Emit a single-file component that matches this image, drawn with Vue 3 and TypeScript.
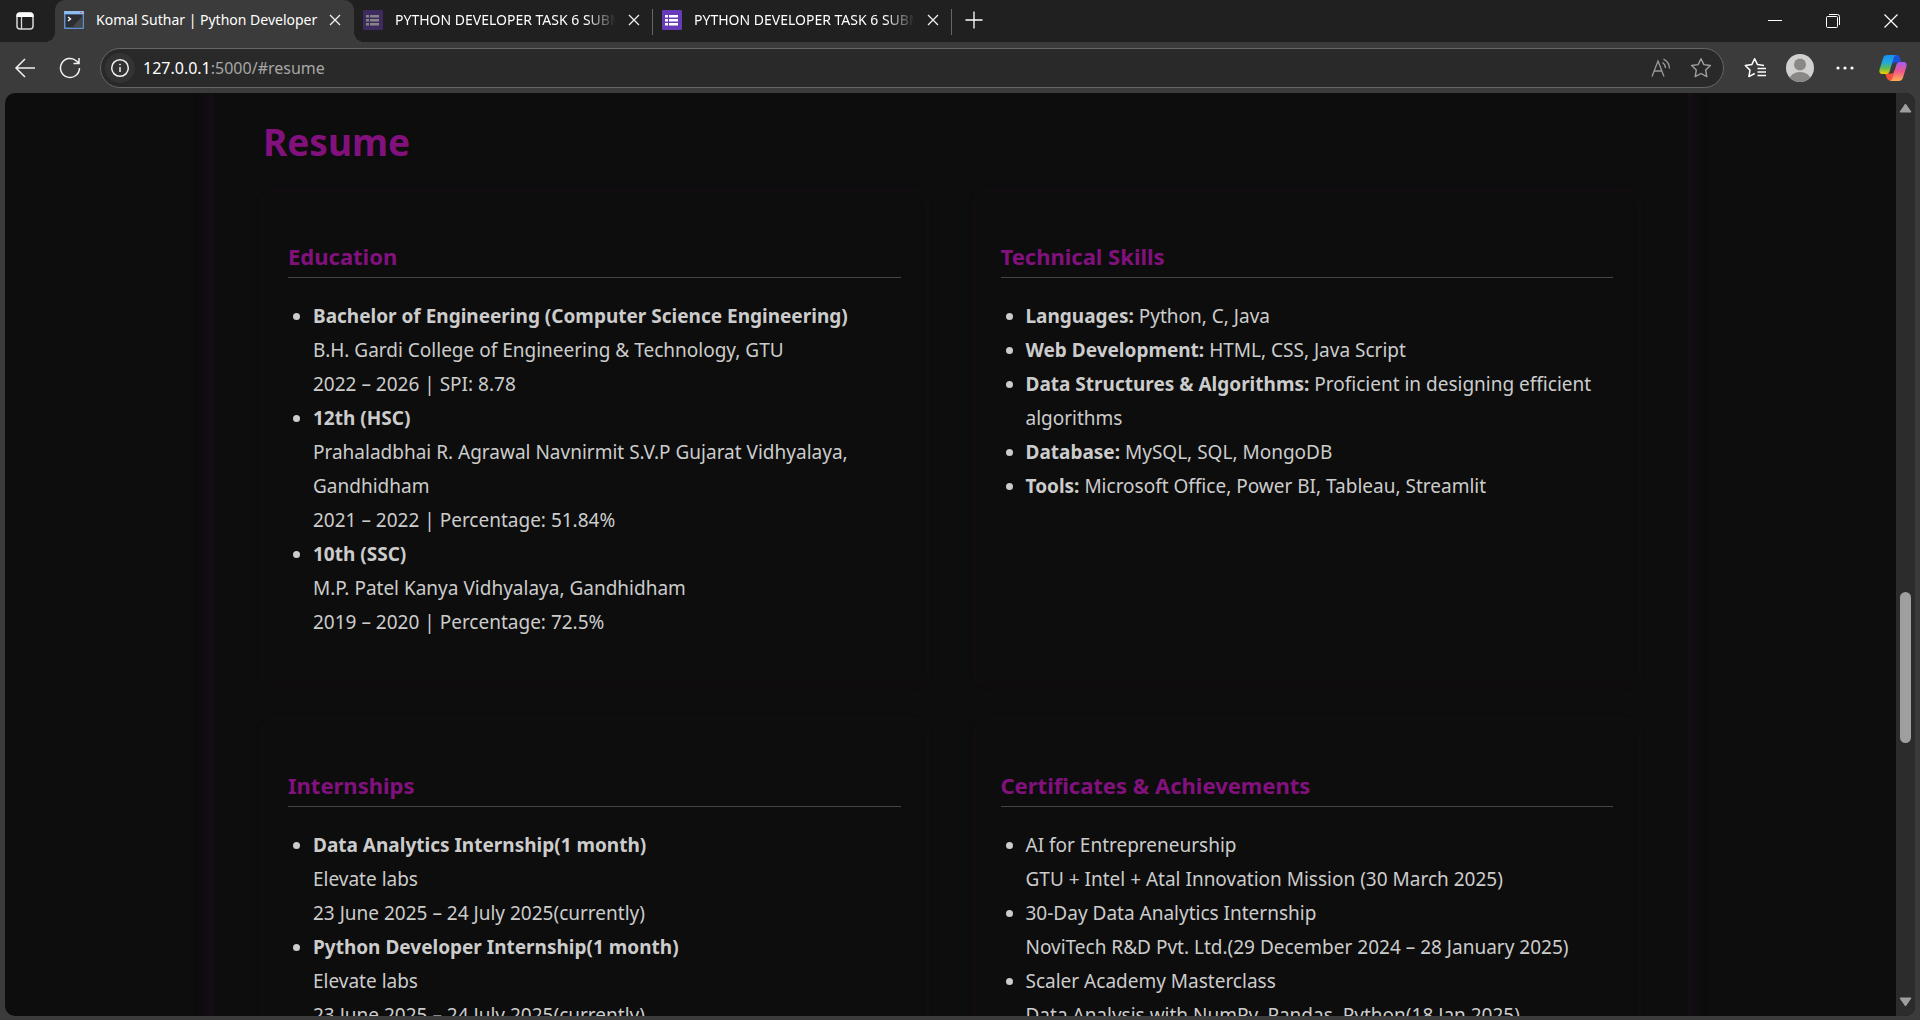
<script setup lang="ts">
interface Tab {
  title: string
  icon: 'console' | 'form' | 'form-dim'
  active?: boolean
}

interface Entry {
  strong?: string
  text?: string
  lines?: string[]
}

interface Card {
  title: string
  entries: Entry[]
}

const tabs: Tab[] = [
  { title: 'Komal Suthar | Python Developer', icon: 'console', active: true },
  { title: 'PYTHON DEVELOPER TASK 6 SUBMISSION', icon: 'form-dim' },
  { title: 'PYTHON DEVELOPER TASK 6 SUBMISSION', icon: 'form' },
]

const cards: Card[] = [
  {
    title: 'Education',
    entries: [
      {
        strong: 'Bachelor of Engineering (Computer Science Engineering)',
        lines: ['B.H. Gardi College of Engineering & Technology, GTU', '2022 – 2026 | SPI: 8.78'],
      },
      {
        strong: '12th (HSC)',
        lines: [
          'Prahaladbhai R. Agrawal Navnirmit S.V.P Gujarat Vidhyalaya, Gandhidham',
          '2021 – 2022 | Percentage: 51.84%',
        ],
      },
      {
        strong: '10th (SSC)',
        lines: ['M.P. Patel Kanya Vidhyalaya, Gandhidham', '2019 – 2020 | Percentage: 72.5%'],
      },
    ],
  },
  {
    title: 'Technical Skills',
    entries: [
      { strong: 'Languages:', text: 'Python, C, Java' },
      { strong: 'Web Development:', text: 'HTML, CSS, Java Script' },
      { strong: 'Data Structures & Algorithms:', text: 'Proficient in designing efficient algorithms' },
      { strong: 'Database:', text: 'MySQL, SQL, MongoDB' },
      { strong: 'Tools:', text: 'Microsoft Office, Power BI, Tableau, Streamlit' },
    ],
  },
  {
    title: 'Internships',
    entries: [
      { strong: 'Data Analytics Internship(1 month)', lines: ['Elevate labs', '23 June 2025 – 24 July 2025(currently)'] },
      { strong: 'Python Developer Internship(1 month)', lines: ['Elevate labs', '23 June 2025 – 24 July 2025(currently)'] },
    ],
  },
  {
    title: 'Certificates & Achievements',
    entries: [
      { text: 'AI for Entrepreneurship', lines: ['GTU + Intel + Atal Innovation Mission (30 March 2025)'] },
      { text: '30-Day Data Analytics Internship', lines: ['NoviTech R&D Pvt. Ltd.(29 December 2024 – 28 January 2025)'] },
      { text: 'Scaler Academy Masterclass', lines: ['Data Analysis with NumPy, Pandas, Python(18 Jan 2025)'] },
    ],
  },
]
</script>

<template>
  <div class="browser">
    <header class="tabstrip">
      <button class="tab-actions" aria-label="Tab actions">
        <svg width="20" height="20" viewBox="0 0 20 20">
          <rect x="2" y="2" width="16" height="16" rx="3" fill="none" stroke="#d8d8d8" stroke-width="1.5" />
          <path d="M1.5 6V4.5a3 3 0 0 1 3-3h11a3 3 0 0 1 3 3V6z" fill="#fff" />
          <path d="M6.5 6v12" stroke="#d8d8d8" stroke-width="1.3" />
        </svg>
      </button>
      <div v-for="(tab, i) in tabs" :key="i" class="tab" :class="{ active: tab.active }">
        <svg v-if="tab.icon === 'console'" class="favicon" width="20" height="20" viewBox="0 0 20 20">
          <rect x="0" y="1" width="20" height="18" rx="1" fill="#5f92cf" />
          <rect x="0" y="1" width="20" height="3" rx="1" fill="#8fbcf0" />
          <rect x="16" y="2" width="2" height="1" fill="#e06050" />
          <rect x="1.500" y="4.500" width="17" height="13" fill="#2b2d30" />
          <path d="M8 17.500L18.500 6v11.500z" fill="#45484b" />
          <path d="M4 7l2.500 2L4 11" fill="none" stroke="#fff" stroke-width="1.400" />
        </svg>
        <svg v-else class="favicon" :class="{ dim: tab.icon === 'form-dim' }" width="20" height="20" viewBox="0 0 20 20">
          <rect width="20" height="20" rx="1" class="form-bg" />
          <path d="M3 5h3v2.500H3zM7 5h9v2.500H7zM3 9h3v2.500H3zM7 9h9v2.500H7zM3 13h3v2.500H3zM7 13h9v2.500H7z" class="form-fg" />
        </svg>
        <span class="tab-title">{{ tab.title }}</span>
        <button class="tab-close" aria-label="Close tab">
          <svg width="12" height="12" viewBox="0 0 12 12">
            <path d="M1 1l10 10M11 1L1 11" stroke="#f0f0f0" stroke-width="1.300" />
          </svg>
        </button>
      </div>
      <button class="new-tab" aria-label="New tab">
        <svg width="18" height="18" viewBox="0 0 18 18">
          <path d="M9 .5v17M.5 9h17" stroke="#fff" stroke-width="1.300" />
        </svg>
      </button>
      <div class="window-controls">
        <button aria-label="Minimize">
          <svg width="14" height="14" viewBox="0 0 14 14"><path d="M0 6.500h14" stroke="#fff" /></svg>
        </button>
        <button aria-label="Restore">
          <svg width="14" height="14" viewBox="0 0 14 14" fill="none" stroke="#fff">
            <rect x=".5" y="2.500" width="11" height="11" rx="1" />
            <path d="M3 .5h8.500a2 2 0 0 1 2 2V11" />
          </svg>
        </button>
        <button aria-label="Close">
          <svg width="14" height="14" viewBox="0 0 14 14"><path d="M.5.5l13 13M13.500.5l-13 13" stroke="#fff" stroke-width="1.200" /></svg>
        </button>
      </div>
    </header>

    <nav class="toolbar">
      <button class="nav-button" aria-label="Back">
        <svg width="22" height="20" viewBox="0 0 22 20" fill="none" stroke="#f2f2f2" stroke-width="1.500">
          <path d="M21 10H2M11 1L2 10l9 9" />
        </svg>
      </button>
      <button class="nav-button" aria-label="Refresh">
        <svg width="22" height="22" viewBox="0 0 22 22" fill="none" stroke="#f2f2f2" stroke-width="1.500">
          <path d="M20.500 11a9.500 9.500 0 1 1-3-7l2.500 2.400M20 1v5.500h-5.500" />
        </svg>
      </button>
      <div class="address">
        <button class="site-info" aria-label="View site information">
          <svg width="20" height="20" viewBox="0 0 20 20" fill="none" stroke="#f2f2f2" stroke-width="1.500">
            <circle cx="10" cy="10" r="8.300" />
            <path d="M10 9v5" />
            <circle cx="10" cy="6.500" r=".5" fill="#f2f2f2" stroke-width=".8" />
          </svg>
        </button>
        <div class="url"><span class="host">127.0.0.1</span>:5000/#resume</div>
        <button class="address-action" aria-label="Read aloud">
          <svg width="20" height="20" viewBox="0 0 20 20" fill="none" stroke="#9a9a9a" stroke-width="1.300">
            <path d="M1 18.500L7 3l6 15.500M3 13h8M11.500 4.500a7 7 0 0 1 3 5.500M12.500 1.200a11 11 0 0 1 6 9.300" />
          </svg>
        </button>
        <button class="address-action" aria-label="Add to favorites">
          <svg width="22" height="22" viewBox="0 0 22 22" fill="none" stroke="#a0a0a0" stroke-width="1.400" stroke-linejoin="round">
            <path d="M11 1.700l2.900 5.900 6.500.9-4.700 4.600 1.100 6.500-5.800-3.100-5.800 3.100 1.100-6.500-4.700-4.600 6.500-.9z" />
          </svg>
        </button>
      </div>
      <button class="tool" aria-label="Favorites">
        <svg width="22" height="22" viewBox="0 0 22 22" fill="none" stroke="#fff" stroke-width="1.500" stroke-linejoin="round">
          <path d="M20 8.500l-6.500-.9L10.700 1.700 7.800 7.600l-6.500.9L6 13.100l-1.100 6.500 5.800-3.100M13.500 11.500H22M13.500 15H22M13.500 18.500H22" />
        </svg>
      </button>
      <button class="tool" aria-label="Profile">
        <svg width="28" height="28" viewBox="0 0 28 28">
          <defs><clipPath id="avatar"><circle cx="14" cy="14" r="14" /></clipPath></defs>
          <circle cx="14" cy="14" r="14" fill="#d2d0ce" />
          <g clip-path="url(#avatar)" fill="#8a8886">
            <circle cx="14" cy="10.500" r="6" />
            <ellipse cx="14" cy="25.500" rx="10.500" ry="7.500" />
          </g>
        </svg>
      </button>
      <button class="tool" aria-label="Settings and more">
        <svg width="18" height="6" viewBox="0 0 18 6" fill="#fff">
          <circle cx="2" cy="3" r="1.600" /><circle cx="9" cy="3" r="1.600" /><circle cx="16" cy="3" r="1.600" />
        </svg>
      </button>
      <button class="tool" aria-label="Copilot">
        <svg width="28" height="26" viewBox="0 0 28 26">
          <defs>
            <linearGradient id="cool" x1="0" y1="0" x2="0" y2="1">
              <stop offset="0" stop-color="#1590f0" />
              <stop offset=".4" stop-color="#22a8dc" />
              <stop offset=".7" stop-color="#62bc50" />
              <stop offset="1" stop-color="#f5d000" />
            </linearGradient>
            <linearGradient id="warm" x1="0" y1="0" x2="0" y2="1">
              <stop offset="0" stop-color="#a05cf0" />
              <stop offset=".5" stop-color="#f0588a" />
              <stop offset="1" stop-color="#ffb050" />
            </linearGradient>
          </defs>
          <path d="M13 0h5c2 0 2.500 1.500 3 3l1.300 4.500H17c-2 0-3 1-3.500 3z" fill="#1c50d8" />
          <path d="M6 18.500h8l2-4 2 3-1 5c-.5 1.500-1.500 3-3 3h-3c-2 0-3-1.500-3.500-3.500z" fill="#f0503c" />
          <path d="M8.500 0H18c-2 0-3 1.500-3.500 3.200L11 15c-.7 2.500-1.500 4-4 4H4C.7 19 0 17 .5 14.500L4 3.500C4.700 1 6 0 8.500 0z" fill="url(#cool)" />
          <path d="M19.500 26H10c2 0 3-1.500 3.500-3.200L17 11c.7-2.500 1.500-4 4-4h3c3.300 0 4 2 3.500 4.500L24 22.500c-.7 2.500-2 3.500-4.500 3.500z" fill="url(#warm)" />
        </svg>
      </button>
    </nav>

    <div class="viewport">
      <main class="page">
        <section id="resume" class="resume">
          <h2>Resume</h2>
          <div class="grid">
            <article v-for="card in cards" :key="card.title" class="card">
              <h3>{{ card.title }}</h3>
              <ul>
                <li v-for="(entry, i) in card.entries" :key="i">
                  <strong v-if="entry.strong">{{ entry.strong }}</strong>
                  {{ entry.text }}
                  <template v-for="line in entry.lines" :key="line"><br />{{ line }}</template>
                </li>
              </ul>
            </article>
          </div>
        </section>
      </main>
      <div class="scrollbar">
        <svg width="13" height="10" viewBox="0 0 13 10">
          <path d="M6.500 1L12 9H1z" fill="#9f9f9f" stroke="#9f9f9f" stroke-linejoin="round" />
        </svg>
        <div class="track"><div class="thumb"></div></div>
        <svg width="13" height="10" viewBox="0 0 13 10">
          <path d="M6.500 9L12 1H1z" fill="#9f9f9f" stroke="#9f9f9f" stroke-linejoin="round" />
        </svg>
      </div>
    </div>
  </div>
</template>

<style>
body {
  margin: 0;
  background: #3b3b3b;
}
</style>

<style scoped>
* {
  box-sizing: border-box;
}

.browser {
  display: flex;
  flex-direction: column;
  height: 100vh;
  overflow: hidden;
  background: #3b3b3b;
  color: #fff;
  font-family: "Noto Sans", "Open Sans", sans-serif;
}

button {
  display: flex;
  align-items: center;
  justify-content: center;
  flex: none;
  padding: 0;
  border: 0;
  background: none;
}

.tabstrip {
  display: flex;
  flex: none;
  height: 42px;
  background: #202020;
}

.tab-actions {
  width: 55px;
  padding-right: 5px;
}

.tab {
  position: relative;
  display: flex;
  align-items: center;
  flex: 0 1 299px;
  min-width: 0;
  padding: 0 9px;
  padding-bottom: 2px;
}

.tab.active {
  background: #3b3b3b;
  border-radius: 10px 10px 0 0;
}

.tab.active::before,
.tab.active::after {
  content: "";
  position: absolute;
  bottom: 0;
  width: 10px;
  height: 10px;
}

.tab.active::before {
  right: 100%;
  background: radial-gradient(circle at 0 0, transparent 10px, #3b3b3b 10px);
}

.tab.active::after {
  left: 100%;
  background: radial-gradient(circle at 100% 0, transparent 10px, #3b3b3b 10px);
}

.tab:not(.active)::after {
  content: "";
  position: absolute;
  top: 9px;
  right: 0;
  width: 1px;
  height: 26px;
  background: #666;
}

.favicon {
  flex: none;
  margin-right: 12px;
}

.form-bg {
  fill: #673ab7;
}

.form-fg {
  fill: #fff;
}

.dim .form-bg {
  fill: #3e2a5e;
}

.dim .form-fg {
  fill: #858585;
}

.tab-title {
  flex: 1;
  overflow: hidden;
  font-size: 14px;
  line-height: 20px;
  white-space: nowrap;
}

.tab:not(.active) .tab-title {
  mask-image: linear-gradient(to right, #000 calc(100% - 34px), transparent calc(100% - 4px));
}

.tab-close {
  width: 20px;
  height: 20px;
  margin-left: 4px;
}

.new-tab {
  width: 44px;
  padding-bottom: 3px;
}

.window-controls {
  display: flex;
  margin-left: auto;
}

.window-controls button {
  width: 58px;
}

.toolbar {
  display: flex;
  align-items: center;
  flex: none;
  height: 51px;
  padding-right: 1px;
}

.nav-button {
  width: 45px;
  margin-left: 2px;
}

.nav-button + .nav-button {
  margin-left: 0;
}

.address {
  display: flex;
  align-items: center;
  flex: 1;
  height: 40px;
  margin-left: 8px;
  margin-right: 8px;
  padding: 0 2px 0 4px;
  border: 1px solid #666;
  border-radius: 20px;
  background: #292929;
}

.site-info {
  width: 30px;
  height: 30px;
  border-radius: 50%;
  background: #333;
}

.url {
  flex: 1;
  margin-left: 8px;
  color: #a6a6a6;
  font-size: 16px;
  line-height: 24px;
}

.host {
  color: #fff;
}

.address-action {
  width: 40px;
}

.tool {
  width: 45px;
}

.tool:last-child {
  width: 52px;
}

.viewport {
  display: flex;
  flex: 1;
  min-height: 0;
  margin: 0 5px 4px;
  overflow: hidden;
  border-radius: 10px;
  background: #0d0d0d;
}

.page {
  flex: 1;
  min-width: 0;
  overflow: hidden;
  color: #ccc;
}

.resume {
  max-width: 1475px;
  margin: -40px auto 0;
  padding: 55px 50px 50px;
  background: #0d0d0d;
  box-shadow: 0 0 20px rgba(128, 16, 128, 0.16);
}

h2 {
  margin: 0 0 16px;
  color: #82117d;
  font-size: 37px;
  line-height: 68px;
}

.grid {
  display: grid;
  grid-template-columns: 1fr 1fr;
  gap: 37px 50px;
}

.card {
  padding: 25px;
  border-radius: 12px;
  background: #0d0d0d;
  box-shadow: 0 0 10px rgba(128, 32, 128, 0.1);
}

h3 {
  margin: 20px 0 21px;
  padding-bottom: 2px;
  border-bottom: 1px solid #444;
  color: #82117d;
  font-size: 22px;
  line-height: 38px;
}

ul {
  margin: 0 0 20px;
  padding-left: 25px;
  font-size: 19px;
  line-height: 34px;
}

.scrollbar {
  display: flex;
  flex-direction: column;
  align-items: center;
  flex: none;
  width: 19px;
  padding: 10px 0 9px;
  background: #2c2c2c;
}

.scrollbar svg {
  flex: none;
}

.track {
  display: flex;
  flex-direction: column;
  flex: 1;
}

.track::before {
  content: "";
  flex: 479;
}

.track::after {
  content: "";
  flex: 254;
}

.thumb {
  flex: 151;
  width: 11px;
  border-radius: 6px;
  background: #9f9f9f;
}
</style>
